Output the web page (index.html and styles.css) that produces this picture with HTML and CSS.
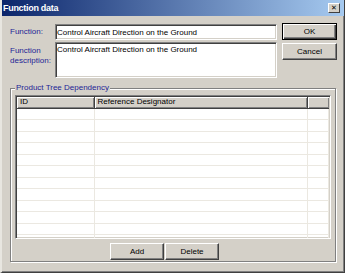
FILE: index.html
```html
<!DOCTYPE html>
<html lang="en">
<head>
  <meta charset="UTF-8" />
  <title>Function data</title>
  <link rel="stylesheet" href="styles.css">
</head>
<body>
  <div class="window">
    <!-- Title bar -->
    <div class="titlebar">
      <span class="title">Function data</span>
      <span class="close">&#x2715;</span>
    </div>

    <div class="content">
      <div class="top">
        <div class="fields">
          <label class="lbl lbl-mid" for="fn">Function:</label>
          <input class="field" id="fn" type="text" value="Control Aircraft Direction on the Ground" />
          <label class="lbl lbl-top" for="desc">Function description:</label>
          <textarea class="field area" id="desc">Control Aircraft Direction on the Ground</textarea>
        </div>
        <div class="actions">
          <button class="btn btn-default">OK</button>
          <button class="btn">Cancel</button>
        </div>
      </div>

      <fieldset class="group">
        <legend>Product Tree Dependency</legend>
        <div class="grid">
          <table>
            <colgroup>
              <col class="c-id" />
              <col class="c-ref" />
              <col />
            </colgroup>
            <thead>
              <tr><th>ID</th><th>Reference Designator</th><th></th></tr>
            </thead>
            <tbody>
              <tr><td></td><td></td><td></td></tr>
              <tr><td></td><td></td><td></td></tr>
              <tr><td></td><td></td><td></td></tr>
              <tr><td></td><td></td><td></td></tr>
              <tr><td></td><td></td><td></td></tr>
              <tr><td></td><td></td><td></td></tr>
              <tr><td></td><td></td><td></td></tr>
              <tr><td></td><td></td><td></td></tr>
              <tr><td></td><td></td><td></td></tr>
              <tr><td></td><td></td><td></td></tr>
              <tr><td></td><td></td><td></td></tr>
              <tr><td></td><td></td><td></td></tr>
            </tbody>
          </table>
        </div>
        <div class="row-buttons">
          <button class="btn">Add</button>
          <button class="btn">Delete</button>
        </div>
      </fieldset>
    </div>
  </div>
</body>
</html>
```

FILE: styles.css
```css
body {
  margin: 0;
  font-family: 'Liberation Sans', Arial, sans-serif;
  font-size: 8px;
  background: #d4d0c8;
}
.window {
  width: 345px;
  height: 273px;
  box-sizing: border-box;
  background: #d4d0c8;
  border-left: 2px solid #e8e6e0;
  border-right: 1px solid #404040;
  border-bottom: 1px solid #404040;
  box-shadow: inset -1px -1px 0 #808080;
  overflow: hidden;
}
.titlebar {
  height: 16px;
  margin-left: -2px;
  display: flex;
  align-items: center;
  justify-content: space-between;
  padding: 0 4px 0 3px;
  background: linear-gradient(to right, #0a246a, #a6caf0);
  color: #fff;
}
.title {
  font-weight: bold;
  font-size: 9px;
  letter-spacing: -0.3px;
  line-height: 16px;
}
.close {
  width: 12px;
  height: 10px;
  box-sizing: border-box;
  background: #d4d0c8;
  color: #000;
  font-family: 'DejaVu Sans', sans-serif;
  font-size: 7px;
  font-weight: bold;
  line-height: 8px;
  text-align: center;
  border: 1px solid;
  border-color: #fff #404040 #404040 #fff;
}
.content {
  padding: 7px 6px 0 8px;
}
.top {
  display: flex;
  gap: 5px;
  align-items: flex-start;
}
.fields {
  display: grid;
  grid-template-columns: 45px 222px;
  row-gap: 2px;
  padding-top: 1px;
}
.lbl {
  color: #1e1e96;
  line-height: 10px;
}
.lbl-mid {
  align-self: center;
}
.lbl-top {
  padding-top: 4px;
}
.field {
  box-sizing: border-box;
  height: 16px;
  margin: 0;
  padding: 0 1px;
  font-family: inherit;
  font-size: 8px;
  color: #000;
  background: #fff;
  border: 1px solid;
  border-color: #808080 #fff #fff #808080;
  box-shadow: inset 1px 1px 0 #404040, inset -1px -1px 0 #d4d0c8;
  outline: none;
}
.area {
  height: 36px;
  padding: 2px 1px;
  line-height: 10px;
  resize: none;
  overflow: hidden;
}
.actions {
  display: flex;
  flex-direction: column;
  gap: 3px;
}
.btn {
  box-sizing: border-box;
  width: 55px;
  height: 17px;
  margin: 0;
  padding: 0;
  font-family: inherit;
  font-size: 8px;
  color: #000;
  background: #d4d0c8;
  border: 1px solid;
  border-color: #fff #404040 #404040 #fff;
  box-shadow: inset -1px -1px 0 #808080;
}
.btn-default {
  border: 1px solid #000;
  box-shadow: inset 1px 1px 0 #fff, inset -1px -1px 0 #404040, inset -2px -2px 0 #808080;
}
.group {
  margin: 5px 2px 0 0;
  padding: 2px 4px 1px 4px;
  border: 1px solid #808080;
  box-shadow: inset 1px 1px 0 #fff, 1px 1px 0 #fff;
  min-inline-size: 0;
}
.group legend {
  padding: 0 1px;
  color: #1e1e96;
  line-height: 10px;
  background: #d4d0c8;
}
.grid {
  height: 144px;
  box-sizing: border-box;
  background: #fff;
  border: 1px solid;
  border-color: #808080 #fff #fff #808080;
  box-shadow: inset 1px 1px 0 #404040, inset -1px -1px 0 #d4d0c8;
  padding: 1px 1px 0 1px;
  overflow: hidden;
}
.grid table {
  width: 100%;
  table-layout: fixed;
  border-collapse: collapse;
}
.c-id {
  width: 77px;
}
.c-ref {
  width: 213px;
}
.grid th {
  height: 11px;
  padding: 0 0 0 3px;
  box-sizing: border-box;
  text-align: left;
  font-weight: normal;
  line-height: 10px;
  background: #d4d0c8;
  border-right: 1px solid #404040;
  border-bottom: 1px solid #404040;
  box-shadow: inset 1px 1px 0 #fff, inset -1px -1px 0 #808080;
}
.grid th:last-child {
  border-right: none;
}
.grid td {
  height: 11.5px;
  padding: 0;
  box-sizing: border-box;
  border-right: 1px solid #ebe8e1;
  border-bottom: 1px solid #ebe8e1;
}
.row-buttons {
  display: flex;
  gap: 1px;
  margin-top: 4px;
  padding-left: 95px;
}
.row-buttons .btn {
  width: 54px;
}
```
